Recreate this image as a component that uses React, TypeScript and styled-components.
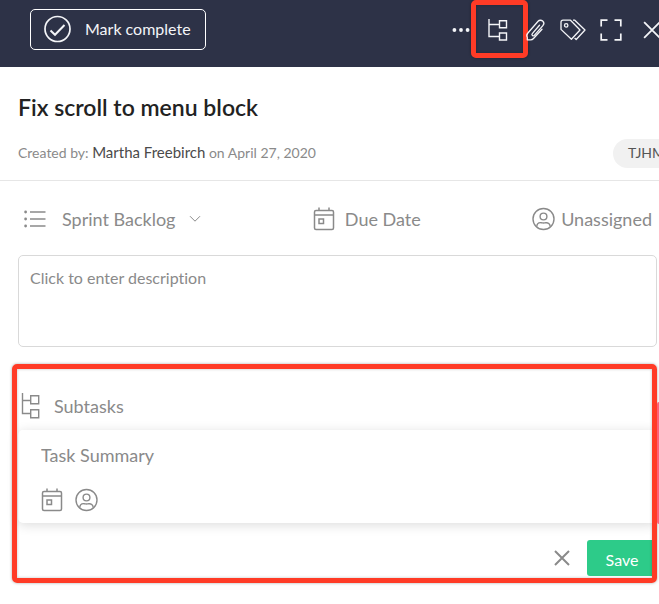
import React from "react";
import styled, { createGlobalStyle } from "styled-components";

const GlobalStyle = createGlobalStyle`
  *, *::before, *::after { box-sizing: border-box; }
  body {
    margin: 0;
    background: #ffffff;
    color: #8a8a8a;
    font-family: Lato, "Liberation Sans", sans-serif;
    font-variant-ligatures: none;
  }
  button, textarea, input { font: inherit; font-variant-ligatures: none; color: inherit; }
  button { padding: 0; border: 0; background: none; cursor: pointer; }
  svg { display: block; flex: none; }
`;

const Page = styled.main`
  overflow: hidden;
  padding-bottom: 20px;
`;

const Toolbar = styled.header`
  display: flex;
  align-items: flex-start;
  justify-content: space-between;
  height: 67px;
  padding: 9px 0 0 30px;
  background: #2d3247;
  color: #f4f5f8;
`;

const CompleteButton = styled.button`
  display: flex;
  align-items: center;
  gap: 14px;
  height: 41px;
  padding: 0 14px 2px 13px;
  border: 1px solid #ffffff;
  border-radius: 5px;
  font-size: 16px;
  line-height: 20px;
`;

const Tools = styled.nav`
  display: flex;
  margin-right: -15px;
`;

const ToolButton = styled.button<{ $width?: number }>`
  position: relative;
  display: flex;
  align-items: center;
  justify-content: center;
  width: ${(p) => p.$width ?? 38}px;
  height: 41px;
`;

const Highlight = styled.span<{ $inset: string }>`
  position: absolute;
  inset: ${(p) => p.$inset};
  border: 5px solid #ff3b26;
  border-radius: 5px;
  box-shadow: 0 0 3px rgba(0, 0, 0, 0.35), inset 0 0 3px rgba(0, 0, 0, 0.25);
  pointer-events: none;
`;

const TaskHeader = styled.section`
  padding: 25px 0 12px 18px;
  border-bottom: 1px solid #e6e6e6;
`;

const Title = styled.h1`
  margin: 0;
  color: #222222;
  font-size: 23px;
  font-weight: 600;
  line-height: 30px;
`;

const MetaRow = styled.div`
  display: flex;
  align-items: center;
  justify-content: space-between;
  margin-top: 17px;
  margin-right: -20px;
`;

const Meta = styled.p`
  margin: 0;
  padding-bottom: 2px;
  font-size: 14px;
  line-height: 18px;
`;

const Author = styled.span`
  color: #4a4a4a;
  font-size: 15px;
`;

const Tag = styled.span`
  height: 29px;
  padding: 0 14px 0 15px;
  border-radius: 15px;
  background: #f1f1f1;
  color: #555555;
  font-size: 14px;
  line-height: 28px;
`;

const Fields = styled.section`
  display: flex;
  align-items: center;
  justify-content: space-between;
  padding: 26px 7px 24px 24px;
`;

const Field = styled.button<{ $gap: number }>`
  display: flex;
  align-items: center;
  gap: ${(p) => p.$gap}px;
  font-size: 18px;
  line-height: 24px;
`;

const Description = styled.textarea`
  display: block;
  width: 100%;
  height: 92px;
  padding: 11px;
  border: 1px solid #d9d9d9;
  border-radius: 5px;
  outline: none;
  resize: none;
  font-size: 16px;
  line-height: 22px;
  &::placeholder { color: #8a8a8a; opacity: 1; }
`;

const Body = styled.div`
  padding: 0 2px 0 18px;
`;

const Subtasks = styled.section`
  position: relative;
  margin-top: 17px;
  padding-bottom: 7px;
`;

const SubtasksTitle = styled.h2`
  display: flex;
  align-items: center;
  gap: 14px;
  margin: 0;
  padding: 29px 0 11px 3px;
  font-size: 18px;
  font-weight: 400;
  line-height: 24px;
`;

const Card = styled.div`
  height: 93px;
  padding: 13px 23px;
  border-radius: 5px;
  background: #ffffff;
  box-shadow: 0 2px 12px rgba(0, 0, 0, 0.14);
`;

const SummaryInput = styled.input`
  display: block;
  width: 100%;
  height: 24px;
  padding: 0;
  border: 0;
  outline: none;
  background: none;
  font-size: 18px;
  &::placeholder { color: #8a8a8a; opacity: 1; }
`;

const CardTools = styled.div`
  display: flex;
  gap: 12px;
  margin-top: 21px;
`;

const Actions = styled.footer`
  display: flex;
  align-items: center;
  justify-content: flex-end;
  gap: 17px;
  margin-top: 17px;
`;

const SaveButton = styled.button`
  width: 70px;
  height: 36px;
  padding-top: 2px;
  border-radius: 3px;
  background: #2dcb89;
  color: #ffffff;
  font-size: 16px;
`;

const SideMarker = styled.span`
  position: absolute;
  top: 38px;
  right: -2px;
  width: 2px;
  height: 122px;
  border-radius: 2px 0 0 2px;
  background: #ff6076;
`;

const line = { fill: "none", stroke: "currentColor" } as const;

const CheckIcon = () => (
  <svg width="27" height="28" viewBox="0 0 27 28" {...line} strokeWidth="1.7">
    <circle cx="13.5" cy="14" r="12.5" />
    <path d="M6.5 15.5l4.5 4.3L20.5 10" strokeWidth="2" />
  </svg>
);

const DotsIcon = () => (
  <svg width="18" height="6" viewBox="0 0 18 6" fill="currentColor">
    <circle cx="2.4" cy="3" r="1.9" />
    <circle cx="9" cy="3" r="1.9" />
    <circle cx="15.6" cy="3" r="1.9" />
  </svg>
);

const TreeIcon = ({ large = false }: { large?: boolean }) => (
  <svg width={large ? 19 : 21} height={large ? 26 : 22} viewBox={large ? "0 0 19 26" : "0 0 21 22"} {...line} strokeWidth="1.4">
    {large ? (
      <path d="M1.5 0v20.5h8M1.5 7.5h8M9.7 2.7h8v8h-8zM9.7 16.7h8v8h-8z" />
    ) : (
      <path d="M2 0v17.5h10M2 5.5h10M12.5 1.7h7v7h-7zM12.5 14h7v7h-7z" />
    )}
  </svg>
);

const ClipIcon = () => (
  <svg width="21" height="22" viewBox="0 0 21 22" {...line} strokeWidth="1.3" strokeLinecap="round" strokeLinejoin="round">
    <path d="M14.500 6.300L7.300 14.600a1.300 1.300 0 0 0 2 1.700L17.900 6.600a3.200 3.200 0 0 0-4.800-4.300L2.900 14a3.800 3.800 0 0 0-.6 4.500v2.300h2.600a4 4 0 0 0 3.600-1.300L17 10.300" />
  </svg>
);

const TagsIcon = () => (
  <svg width="26" height="22" viewBox="0 0 26 22" {...line} strokeWidth="1.3" strokeLinejoin="round">
    <path d="M1 3.2Q1 1.2 3 1.2h7.5L20 11l-8.6 9.3L1 10.4z" />
    <path d="M13 1.2h1.8L25 11l-8.8 9.5-1.6-1.5" />
    <circle cx="6.2" cy="6.4" r="1.7" />
  </svg>
);

const ExpandIcon = () => (
  <svg width="22" height="22" viewBox="0 0 22 22" {...line} strokeWidth="1.7">
    <path d="M1.2 7.5V1.2h6.3M14.5 1.2h6.3v6.3M20.8 14.5v6.3h-6.3M7.5 20.8H1.2v-6.3" />
  </svg>
);

const CrossIcon = ({ size, weight }: { size: number; weight: number }) => (
  <svg width={size} height={size} viewBox="0 0 16 16" {...line} strokeWidth={weight}>
    <path d="M1 1l14 14M15 1L1 15" />
  </svg>
);

const ListIcon = () => (
  <svg width="24" height="18" viewBox="0 0 24 18" {...line} strokeWidth="1.5">
    <path d="M6 2h15.5M6 9h15.5M6 16h15.5" />
    <g fill="currentColor" stroke="none">
      <circle cx="1.6" cy="2" r="1.4" />
      <circle cx="1.6" cy="9" r="1.4" />
      <circle cx="1.6" cy="16" r="1.4" />
    </g>
  </svg>
);

const ChevronIcon = () => (
  <svg width="12" height="8" viewBox="0 0 12 8" {...line} strokeWidth="1">
    <path d="M1 1.2l5 5 5-5" />
  </svg>
);

const CalendarIcon = () => (
  <svg width="22" height="24" viewBox="0 0 22 24" {...line} strokeWidth="1.5">
    <rect x="1.5" y="3.5" width="19" height="19" rx="1.5" />
    <path d="M6 0.5v3M16 0.5v3M1.5 8h19" />
    <rect x="6" y="12" width="4.5" height="4.5" />
  </svg>
);

const PersonIcon = () => (
  <svg width="23" height="24" viewBox="0 0 23 24" {...line} strokeWidth="1.4">
    <circle cx="11.5" cy="12" r="10.5" />
    <circle cx="11.5" cy="9.5" r="3.4" />
    <path d="M4.7 19.7c.3-3 2.3-4.2 4.3-4 1.7.5 3.3.5 5 0 2-.2 4 1 4.300 4" />
  </svg>
);

export default function App() {
  return (
    <>
      <GlobalStyle />
      <Page>
        <Toolbar>
          <CompleteButton type="button">
            <CheckIcon />
            Mark complete
          </CompleteButton>
          <Tools aria-label="Task tools">
            <ToolButton type="button" $width={34} aria-label="More"><DotsIcon /></ToolButton>
            <ToolButton type="button" aria-label="Subtasks">
              <TreeIcon />
              <Highlight $inset="-9px -12px -8px -7px" />
            </ToolButton>
            <ToolButton type="button" aria-label="Attach file"><ClipIcon /></ToolButton>
            <ToolButton type="button" aria-label="Tags"><TagsIcon /></ToolButton>
            <ToolButton type="button" aria-label="Full screen"><ExpandIcon /></ToolButton>
            <ToolButton type="button" $width={44} aria-label="Close"><CrossIcon size={18} weight={1.6} /></ToolButton>
          </Tools>
        </Toolbar>

        <TaskHeader>
          <Title>Fix scroll to menu block</Title>
          <MetaRow>
            <Meta>
              Created by: <Author>Martha Freebirch</Author> on April 27, 2020
            </Meta>
            <Tag>TJHM</Tag>
          </MetaRow>
        </TaskHeader>

        <Fields>
          <Field type="button" $gap={14}>
            <ListIcon />
            Sprint Backlog
            <ChevronIcon />
          </Field>
          <Field type="button" $gap={10}>
            <CalendarIcon />
            Due Date
          </Field>
          <Field type="button" $gap={6}>
            <PersonIcon />
            Unassigned
          </Field>
        </Fields>

        <Body>
          <Description aria-label="Description" placeholder="Click to enter description" />
          <Subtasks>
            <SubtasksTitle>
              <TreeIcon large />
              Subtasks
            </SubtasksTitle>
            <Card>
              <SummaryInput aria-label="Task summary" placeholder="Task Summary" />
              <CardTools>
                <button type="button" aria-label="Set due date"><CalendarIcon /></button>
                <button type="button" aria-label="Assign"><PersonIcon /></button>
              </CardTools>
            </Card>
            <Actions>
              <button type="button" aria-label="Cancel"><CrossIcon size={16} weight={2} /></button>
              <SaveButton type="button">Save</SaveButton>
            </Actions>
            <Highlight $inset="0 0 0 -6px" />
            <SideMarker />
          </Subtasks>
        </Body>
      </Page>
    </>
  );
}
